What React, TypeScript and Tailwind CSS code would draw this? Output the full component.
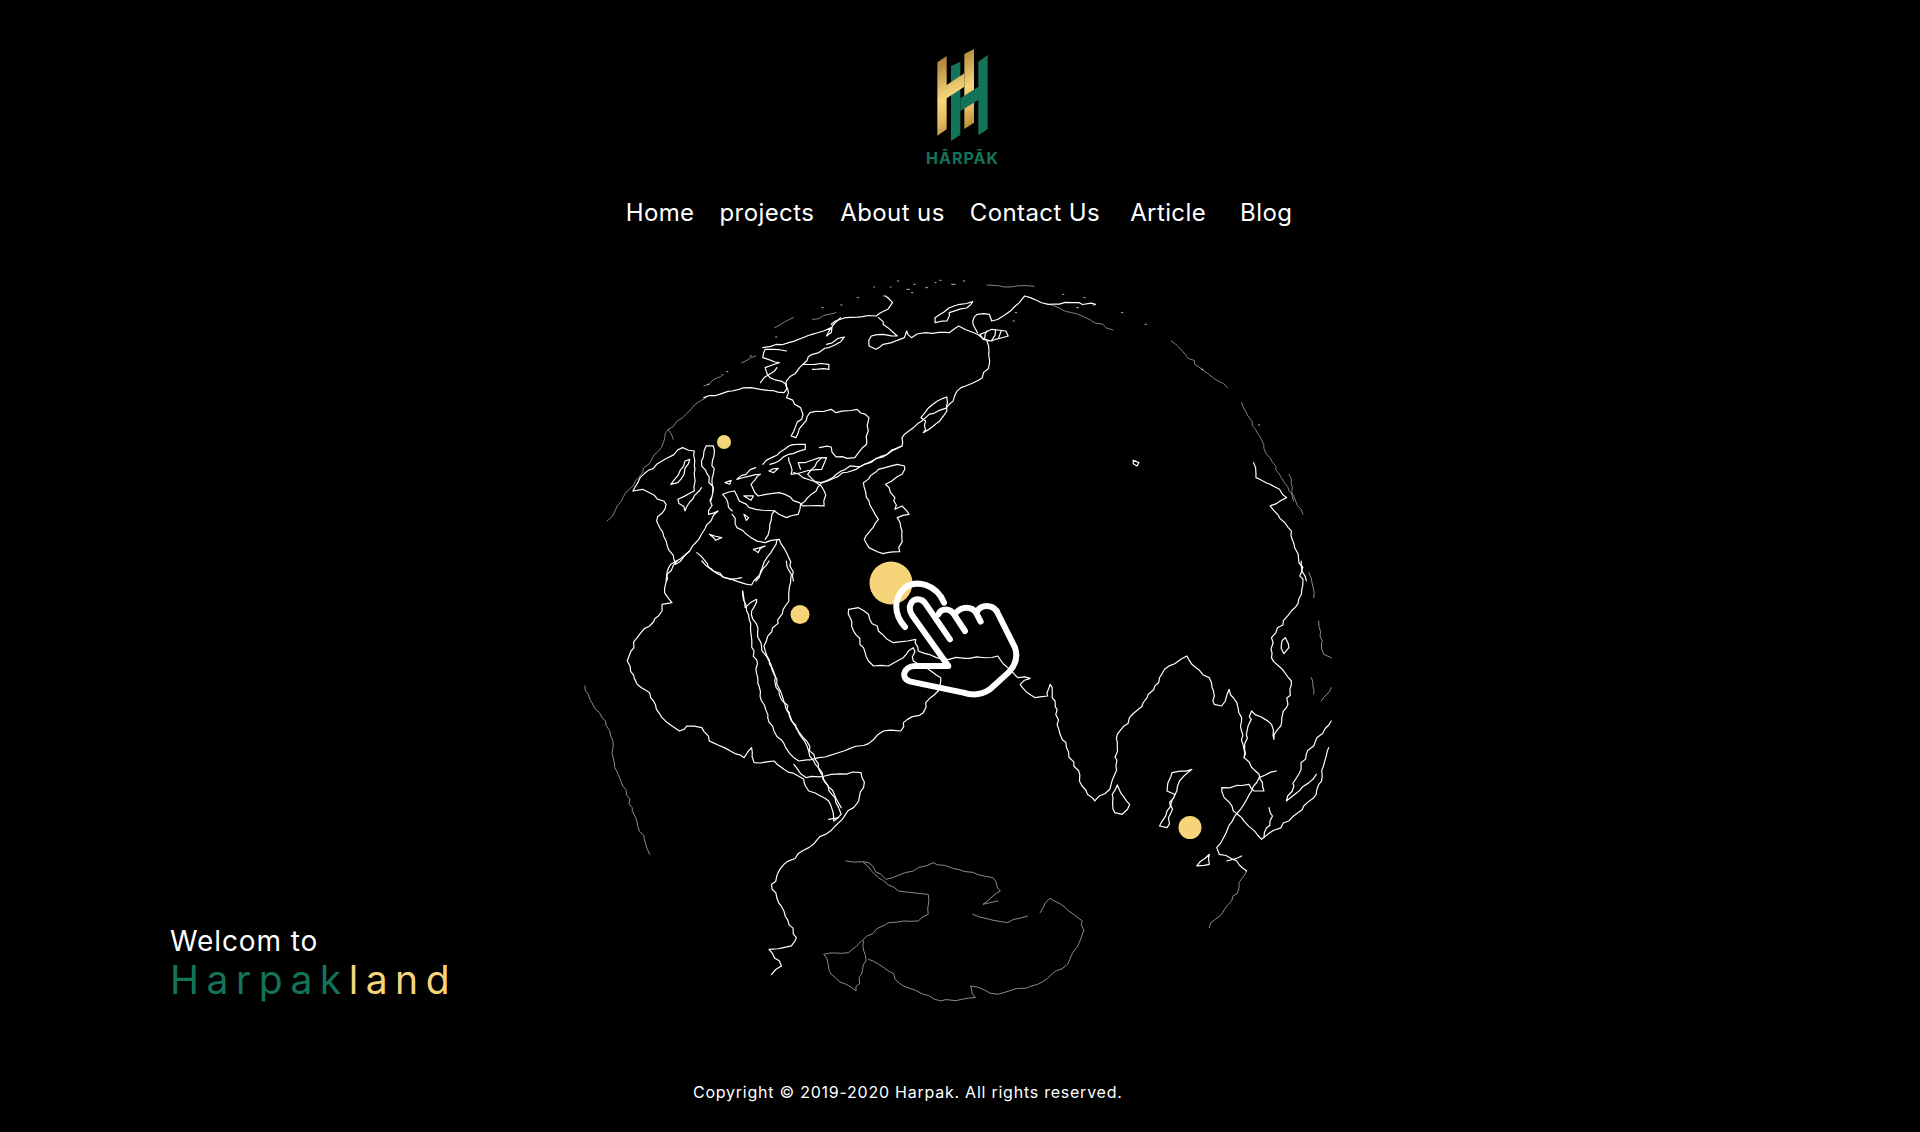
import React from 'react';

const navItems = [
  { label: 'Home', className: '' },
  { label: 'projects', className: 'ml-[25px]' },
  { label: 'About us', className: 'ml-[26px]' },
  { label: 'Contact Us', className: 'ml-[25px]' },
  { label: 'Article', className: 'ml-[30px]' },
  { label: 'Blog', className: 'ml-[34px]' },
];

// coastlines traced from the upper half of the globe
const northCoasts = [
  'M490,430 L520,410 L585,405 L610,385 L620,365 L605,345',
  'M345,500 L400,485 L490,440 L480,465 L510,410',
  'M480,490 L518,468 L510,482 L450,520 L430,550 L395,600 L398,625 L395,650 L425,680 L430,700 L405,765 L415,770 L430,730 L445,695 L490,685 L500,695 L545,685 L570,710 L565,790 L540,830 L500,828 L490,798 L465,800',
  'M825,480 L800,460 L760,435 L740,455 L690,455 L660,470 L650,450 L645,470 L630,478 L600,490 L585,505 L570,495 L575,465 L600,460 L630,465 L610,440 L590,410',
  'M820,480 L825,550 L810,590 L765,620 L740,670 L690,710 L640,770 L640,795 L550,858 L530,855 L470,905 L430,890 L410,875',
  'M735,648 L715,660 L680,710 L690,720 L685,755 L720,720 L735,690 Z',
  'M710,410 L750,375 L790,362 L785,372 L740,395 L735,420 L710,425 Z',
  'M800,455 L790,420 L800,400 L825,400 L830,420 L860,400 L880,375 L900,345 L950,370 L1000,365 L1050,370',
  'M805,460 L830,445 L860,450 L865,465 L830,480 L812,475 Z',
  'M820,450 L815,475 M838,448 L830,478 M850,450 L845,470',
  'M1385,845 L1390,890 L1420,910 L1440,925 L1455,950 L1420,975 L1465,1050 L1480,1130 L1497,1200',
  'M1130,838 L1142,845 L1138,855 L1130,848 Z',
  'M630,850 L590,865 L558,905 L570,960 L590,1015 L560,1075 L570,1100 L600,1118 L635,1112 L640,1050 L630,1010 L655,1000 L640,975 L625,985 L625,950 L605,910 L640,880 L645,855 Z',
  'M345,850 L400,795 L435,790 L435,805 L400,820 L360,850',
  'M400,830 L405,880 L470,865 L480,830 L420,845 L425,865',
  'M470,830 L440,880 L475,930 L475,975 L430,975 L380,935 L335,945 L320,910 L340,880 L290,895 L330,860',
  'M640,795 L550,858 L470,905 L440,950 L425,970 L420,1000 L395,1010 L370,990',
  'M70,930 L90,925 L135,960 L140,970 L120,1020 L140,1080 L160,1150 L190,1110 L215,1060 L235,1020 L250,990 L230,1000 L240,930 L215,840 L225,795 L240,795 L240,880 L235,960',
  'M70,930 L85,890 L120,850 L175,800 L200,810 L200,930 L165,955 L180,990 L215,920',
  'M150,910 L180,840 L190,835 L165,905 Z',
  'M190,1110 L150,1150 L140,1200',
  'M205,1115 L240,1170 L275,1195 L300,1190',
  'M280,1000 L290,1040 L320,1070 L350,1085 L380,1075 L400,1130 L410,1200',
  'M375,1075 L330,1200',
  'M280,990 L260,940 L285,930 L295,960 L330,985 L370,990 L360,1030 L350,1075',
  'M232,1060 L258,1070 L245,1078 Z',
  'M325,1105 L350,1095 L335,1115 Z',
  'M305,1000 L315,1010 L310,1018 Z',
  'M305,945 L325,945 L320,958 Z',
  'M358,870 L378,862 L368,875 Z',
  'M265,905 L278,898 L275,910 Z',
  'M220,650 L280,630 L320,620 L340,625 L390,635 L395,610 L360,590 L350,560 L380,545 L345,530 L350,505 L395,510',
  'M340,605 L375,560 M430,550 L485,550 L485,565 L450,565',
];

// thin lines fading out toward the edge of the globe
const northFaint = [
  'M15,1020 L75,900 L130,800 L145,745 L155,775',
  'M145,745 L190,690 L200,672 L225,650',
  'M1210,480 L1240,520 L1280,570 L1330,620',
  'M1360,665 L1395,760 L1420,830 L1460,930 L1490,1000',
  'M1460,880 L1470,960',
  'M820,312 L870,318 L920,316',
  'M220,615 L262,580 M300,545 L330,525',
  'M450,415 L500,395 M370,440 L410,410',
  'M950,370 L1000,395 L1087,447',
];

const arcticSpecks = 'M630,300 h3 M650,325 h6 M665,310 h3 M690,320 h4 M720,298 h3 M745,310 h8 M770,300 h3 M600,345 h3 M545,350 h3 M510,372 h3 M470,380 h3 M372,468 h3 M318,525 h3 M268,572 h3 M228,610 h3 M980,340 h3 M1025,350 h3 M1045,372 h3 M1010,380 h4 M1105,395 h3 M1155,430 h3 M1275,565 h3 M1395,732 h3 M660,335 h3 M580,318 h2 M615,318 h2 M710,305 h2 M880,395 h3 M875,420 h3';

// coastlines traced from the lower half of the globe
const southCoasts = [
  'M215,0 L195,40 L190,95 L205,125 L185,130 L185,150 L160,195 L135,230 L115,300 L135,370 L160,395 L185,470 L220,510 L235,495 L265,500 L280,540 L310,560 L350,590 L365,560 L370,605 L410,600 L430,625 L470,655 L480,690 L520,720 L530,780 L545,760 L540,740 L490,580 L445,480 L420,390 L390,255 L440,120 L445,40 L435,0',
  'M265,0 L310,50 L365,72 L400,0',
  'M347,90 L355,150 L370,270 L385,420 L410,510 L450,590 L460,600 L500,590 L600,548 L630,510 L665,510 L670,485 L710,455 L715,425 L740,390',
  'M347,90 L352,140 L375,115 L365,150 L385,255 L410,340 L450,490 L490,600 L545,740',
  'M450,610 L475,650 L525,640 L585,635 L590,680 L570,740 L530,800 L480,860 L430,910 L405,970 L430,1050 L455,1130 L445,1155 L400,1165 L425,1215 L405,1240',
  'M520,775 L540,770',
  'M560,145 L580,140 L600,160 L620,210 L650,245 L695,235 L700,270 L750,295 L860,285 L880,320 L900,350 L925,352 L905,370 L935,410 L960,405 L965,370 L975,420 L985,520 L1040,700 L1055,720 L1085,685 L1095,640 L1100,520 L1160,410 L1195,325 L1240,285 L1250,310 L1285,350 L1295,430 L1310,435 L1325,385 L1350,470 L1355,590 L1385,640 L1395,690 L1375,690 L1365,670 L1310,680 L1315,710 L1350,770 L1390,835 L1445,780 L1500,700 L1525,560',
  'M560,145 L570,210 L590,260 L600,300 L610,315 L640,315 L670,290 L690,260 L690,300 L745,350 L740,390',
  'M1100,672 L1125,730 L1110,760 L1095,755 L1090,700 Z',
  'M1250,625 L1210,635 L1200,690 L1215,700 L1200,750 L1185,795 L1200,800 L1215,705 L1225,660 Z',
  'M1470,0 L1470,100 L1450,150 L1410,230 L1410,290 L1450,360 L1440,440 L1415,535 L1410,490 L1370,450 L1355,590',
  'M1438,230 L1445,260 L1435,278 L1430,250 Z',
  'M1420,630 L1385,650 L1300,860 L1305,880 L1340,900 L1360,930',
  'M1285,880 L1260,915 L1285,910 Z',
  'M1320,900 L1350,885',
  'M1530,480 L1480,580 L1440,720 L1500,640',
  'M1405,740 L1412,765 L1395,830',
];

const southFaint = [
  'M30,375 L40,415 L80,510 L90,620 L125,740 L160,880',
  'M1485,35 L1495,110',
  'M1505,180 L1515,280 L1530,290',
  'M1490,350 L1495,400 M1510,420 L1530,380',
  'M1360,930 L1330,1020 L1285,1100',
  'M555,900 L600,905 L635,955 L690,930 L730,905 L780,925 L850,950 L865,990 L830,1030 L860,1020',
  'M590,905 L620,950 L660,990 L720,1000 L720,1060 L700,1080 L640,1085 L590,1135 L560,1175 L510,1180 L525,1240 L575,1290 L595,1200 L590,1140',
  'M600,1195 L640,1230 L670,1275 L745,1320 L815,1310 L805,1275 L860,1300 L940,1270 L1000,1210 L1030,1120 L1030,1080 L965,1012 L945,1055',
  'M810,1060 L880,1085 L920,1065',
];

// breaks long straight runs into small uneven steps so traced lines read as coast
function coast(d: string) {
  let seed = d.length;
  const wiggle = () => {
    seed = (seed * 9301 + 49297) % 233280;
    return seed / 233280 - 0.5;
  };
  return d.replace(/M[^M]+/g, (part) => {
    const nums = part.match(/-?\d+(\.\d+)?/g)?.map(Number) ?? [];
    if (/h/.test(part) || nums.length < 4) return part;
    const closed = /Z/.test(part);
    const pts: number[][] = [];
    for (let i = 0; i < nums.length; i += 2) pts.push([nums[i], nums[i + 1]]);
    if (closed) pts.push(pts[0]);
    let out = `M${pts[0][0]},${pts[0][1]}`;
    for (let i = 1; i < pts.length; i++) {
      const [ax, ay] = pts[i - 1];
      const [bx, by] = pts[i];
      const steps = Math.max(1, Math.round(Math.hypot(bx - ax, by - ay) / 14));
      for (let s = 1; s <= steps; s++) {
        const t = s / steps;
        const jitter = s === steps ? 0 : 7;
        out += ` L${(ax + (bx - ax) * t + wiggle() * jitter).toFixed(1)},${(ay + (by - ay) * t + wiggle() * jitter).toFixed(1)}`;
      }
    }
    return out;
  });
}

function Logo() {
  return (
    <svg width="160" height="122" viewBox="0 0 480 366" aria-hidden="true">
      <defs>
        <linearGradient id="goldBar" gradientUnits="userSpaceOnUse" x1="180" y1="70" x2="290" y2="300">
          <stop offset="0" stopColor="#a4752d" />
          <stop offset="0.5" stopColor="#f6d67c" />
          <stop offset="0.72" stopColor="#e6bd62" />
          <stop offset="1" stopColor="#ad7c30" />
        </linearGradient>
      </defs>
      <polygon points="253,72 282,57 282,278 253,297" fill="url(#goldBar)" />
      <polygon points="213,108 241,95 241,315 213,333" fill="#14745a" />
      <polygon
        points="172,97 200,78 200,165 253,130 253,170 200,205 200,298 172,317"
        fill="url(#goldBar)"
      />
      <polygon
        points="295,95 323,75 323,297 295,316 295,210 241,243 241,205 295,170"
        fill="#14745a"
      />
    </svg>
  );
}

function HandCursor() {
  return (
    <g
      transform="translate(270 285) scale(0.3333)"
      fill="none"
      stroke="#ffffff"
      strokeWidth="18"
      strokeLinecap="round"
      strokeLinejoin="round"
    >
      <path d="M165,228 C130,190 130,140 165,110 C200,85 260,100 282,155" />
      <path d="M440,180 L495,290 C505,320 495,345 475,365 L420,415 C395,432 370,435 340,425 L182,392 C150,385 160,345 195,345 L295,345 L186,192 C180,182 176,172 182,160 C190,140 215,140 228,160 L300,265" />
      <path d="M265,190 C275,170 300,172 312,190 L345,240" />
      <path d="M318,185 C335,165 365,165 378,185 L392,212" />
      <path d="M382,180 C395,160 425,160 440,180" />
    </g>
  );
}

function Globe() {
  return (
    <svg width="760" height="750" viewBox="0 0 760 750" aria-hidden="true">
      <g
        transform="translate(20 -85) scale(0.4719 0.3333)"
        fill="none"
        stroke="#ffffff"
        strokeLinejoin="round"
        strokeLinecap="round"
      >
        {northCoasts.map((d) => (
          <path key={d} d={coast(d)} strokeWidth="1.2" vectorEffect="non-scaling-stroke" />
        ))}
        {northFaint.map((d) => (
          <path key={d} d={coast(d)} strokeWidth="1" opacity="0.5" vectorEffect="non-scaling-stroke" />
        ))}
        <path d={arcticSpecks} strokeWidth="1" opacity="0.7" vectorEffect="non-scaling-stroke" />
      </g>
      <g
        transform="translate(-10 295) scale(0.4975 0.3333)"
        fill="none"
        stroke="#ffffff"
        strokeLinejoin="round"
        strokeLinecap="round"
      >
        {southCoasts.map((d) => (
          <path key={d} d={coast(d)} strokeWidth="1.2" vectorEffect="non-scaling-stroke" />
        ))}
        {southFaint.map((d) => (
          <path key={d} d={coast(d)} strokeWidth="1" opacity="0.55" vectorEffect="non-scaling-stroke" />
        ))}
      </g>
      <circle cx="144" cy="176" r="7" fill="#f6d57a" />
      <circle cx="220" cy="348.5" r="9.5" fill="#f6d57a" />
      <circle cx="311" cy="317" r="21.5" fill="#f6d57a" />
      <circle cx="610" cy="561.5" r="11.5" fill="#f6d57a" />
      <HandCursor />
    </svg>
  );
}

export default function App() {
  return (
    <div
      className="h-[1132px] w-full bg-black text-white flex flex-col items-center overflow-hidden"
      style={{ fontFamily: 'Inter, "Liberation Sans", sans-serif' }}
    >
      {/* Logo */}
      <div className="relative mt-[30px] w-[160px] h-[122px]">
        <Logo />
        <span className="absolute left-[5px] right-0 top-[118px] text-center text-[16px] leading-5 font-bold tracking-[1px] text-[#14745a]">
          HĀRPĀK
        </span>
      </div>

      {/* Nav */}
      <nav className="mt-[47px] flex items-center text-[24px] leading-7 tracking-[0.4px] -translate-x-[1px]">
        {navItems.map((item) => (
          <a key={item.label} href="#" className={item.className}>
            {item.label}
          </a>
        ))}
      </nav>

      {/* Globe row */}
      <div className="mt-[39px] w-full grid grid-cols-[580px_760px_1fr]">
        <div className="self-end pl-[170px] pb-[13px]">
          <p className="text-[28px] leading-8 tracking-[0.9px]">Welcom to</p>
          <p className="text-[39px] leading-[46px] tracking-[7.5px] whitespace-nowrap">
            <span className="text-[#14745a]">Harpak</span>
            <span className="text-[#f6d57a]">land</span>
          </p>
        </div>
        <Globe />
        <div />
      </div>

      {/* Footer */}
      <p className="mt-[66px] self-start ml-[693px] text-[16px] leading-5 tracking-[0.76px] whitespace-nowrap">
        Copyright © 2019-2020 Harpak. All rights reserved.
      </p>
    </div>
  );
}
